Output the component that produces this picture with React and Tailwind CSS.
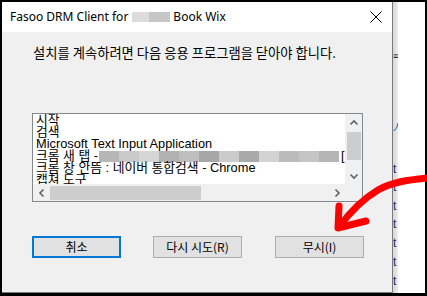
import React from 'react'

const blurBlocks = ['#b6b6b6', '#c9c9c9', '#d5d5d5', '#b1b1b1', '#bfbfbf', '#a7a7a7', '#cbcbcb', '#a9a9a9', '#d3d3d3', '#bbbbbb', '#c5c5c5', '#b5b5b5']

const Chevron = ({ dir }) => {
  const d = {
    up: 'M1.5 5.5 L5 2 L8.5 5.5',
    down: 'M1.5 2.5 L5 6 L8.5 2.5',
    left: 'M5.5 1.5 L2 5 L5.5 8.5',
    right: 'M2.5 1.5 L6 5 L2.5 8.5',
  }[dir]
  const w = dir === 'up' || dir === 'down' ? 10 : 8
  const h = dir === 'up' || dir === 'down' ? 8 : 10
  return (
    <svg width={w} height={h} viewBox={`0 0 ${w} ${h}`}>
      <path d={d} fill="none" stroke="#606060" strokeWidth="1.6" />
    </svg>
  )
}

const ListBox = () => {
  const lines = ['시작', '검색', 'Microsoft Text Input Application']
  return (
    <div className="ml-[30px] mt-[52px] w-[331px] h-[89px] border border-[#828790] bg-white flex flex-col">
      <div className="flex flex-1 min-h-0">
        <div className="flex-1 overflow-hidden pl-[3px] text-[12.8px] leading-[12px] text-black whitespace-nowrap">
          {lines.map((l) => (
            <div key={l} className="h-[12px]">{l}</div>
          ))}
          <div className="h-[12px] flex items-center">
            <span>크롬 새 탭 - </span>
            <span className="flex h-[11px] ml-[1px]">
              {blurBlocks.map((c, i) => (
                <span key={i} className="w-[20px] h-[11px] inline-block" style={{ backgroundColor: c }} />
              ))}
            </span>
            <span className="ml-[2px]">[</span>
          </div>
          <div className="h-[12px]">크롬 창 안뜸 : 네이버 통합검색 - Chrome</div>
          <div className="h-[12px]">캡쳐 도구</div>
        </div>
        <div className="w-[17px] bg-[#f0f0f0] flex flex-col items-center">
          <div className="h-[17px] flex items-center justify-center"><Chevron dir="up" /></div>
          <div className="w-[14px] h-[28px] bg-[#cdcdcd] mt-[1px]" />
          <div className="flex-1" />
          <div className="h-[17px] flex items-center justify-center"><Chevron dir="down" /></div>
        </div>
      </div>
      <div className="h-[17px] flex bg-[#f0f0f0]">
        <div className="flex-1 flex items-center">
          <div className="w-[17px] flex justify-center"><Chevron dir="left" /></div>
          <div className="w-[151px] h-[14px] bg-[#cdcdcd]" />
          <div className="flex-1" />
          <div className="w-[17px] flex justify-center"><Chevron dir="right" /></div>
        </div>
        <div className="w-[17px] bg-[#f0f0f0]" />
      </div>
    </div>
  )
}

const Btn = ({ children, primary, className }) => (
  <div
    className={
      'w-[89px] h-[22px] bg-[#e1e1e1] flex items-center justify-center text-[12px] text-black ' +
      (primary ? 'border-2 border-[#0078d7] ' : 'border border-[#adadad] ') +
      className
    }
  >
    {children}
  </div>
)

const App = () => {
  const ts = [171, 189, 208, 226, 245, 264, 283]
  return (
    <div
      className="relative w-[427px] h-[296px] bg-black pt-[2px] pl-[2px] pr-[2px] pb-[3px] overflow-hidden"
      style={{ fontFamily: '"Liberation Sans", "Noto Sans CJK KR", sans-serif' }}
    >
      <div className="flex h-full">
        <div className="w-[391px] h-full border-r border-b border-[#7a7a7a] flex flex-col">
          <div className="h-[30px] bg-white flex items-center pl-[8px] pr-[10px] text-[12px] text-black" style={{ fontFamily: '"Noto Sans", "Noto Sans CJK KR", sans-serif' }}>
            <span>Fasoo DRM Client for</span>
            <span className="ml-[4px] flex h-[10px]">
              <span className="w-[17px] bg-[#dcdcdc]" />
              <span className="w-[21px] bg-[#c6c6c6]" />
            </span>
            <span className="ml-[3px]">Book Wix</span>
            <div className="flex-1" />
            <svg width="12" height="12" viewBox="0 0 12 12">
              <path d="M0.5 0.5 L11.5 11.5 M11.5 0.5 L0.5 11.5" stroke="#000" strokeWidth="1" />
            </svg>
          </div>
          <div className="flex-1 bg-[#f0f0f0] flex flex-col">
            <div className="pl-[31px] mt-[12px] text-[13.3px] leading-[17px] text-black" style={{ fontFamily: '"Noto Sans CJK KR", sans-serif' }}>
              설치를 계속하려면 다음 응용 프로그램을 닫아야 합니다.
            </div>
            <ListBox />
            <div className="flex mt-[34px] pl-[30px]" style={{ fontFamily: '"Noto Sans CJK KR", sans-serif' }}>
              <Btn primary>취소</Btn>
              <Btn className="ml-[32px]">다시 시도(R)</Btn>
              <Btn className="ml-[33px]">무시(I)</Btn>
            </div>
          </div>
        </div>
        <div className="w-[5px] h-full bg-gradient-to-r from-[#d8d8d8] to-[#ececec] flex flex-col overflow-hidden">
          <div className="h-[50px]" />
          <div className="text-[9px] leading-[9px] text-black">≡</div>
          <div className="h-[62px]" />
          <div className="text-[9px] leading-[9px] text-[#2060c0]">人</div>
          <div className="flex-1 relative">
            {ts.map((t) => (
              <span key={t} className="absolute left-0 text-[12px] leading-[12px] text-[#1a2a60]" style={{ top: t - 140 }}>t</span>
            ))}
          </div>
        </div>
        <div className="w-[27px] h-full bg-white" />
      </div>
      <svg className="absolute left-0 top-0 pointer-events-none" width="427" height="296" viewBox="0 0 427 296">
        <path d="M427 178 C 408 180, 392 182, 378 190 C 363 199, 350 212, 339 227" fill="none" stroke="#ff0000" strokeWidth="7" strokeLinecap="round" />
        <path d="M339 206 L 338 228 L 366 221" fill="none" stroke="#ff0000" strokeWidth="7" strokeLinecap="round" strokeLinejoin="round" />
      </svg>
    </div>
  )
}

export default App
